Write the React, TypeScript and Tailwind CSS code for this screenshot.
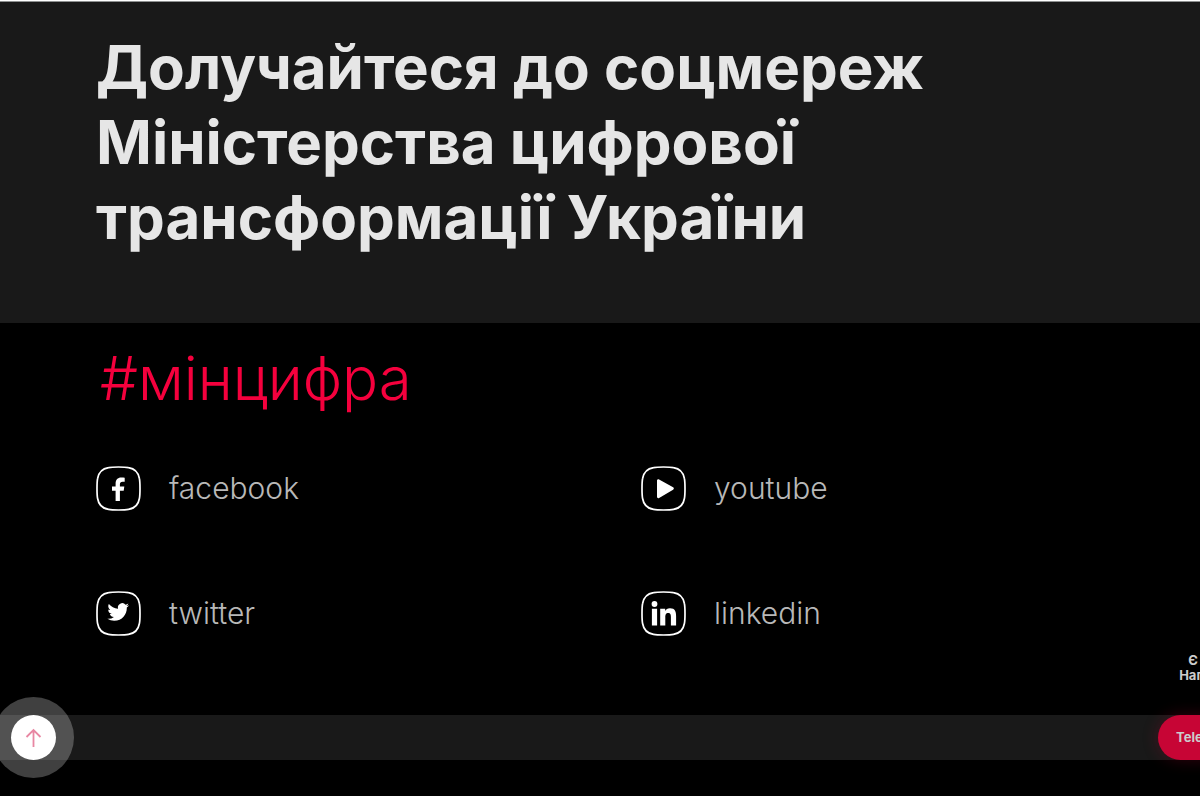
import type { ReactNode } from 'react'

interface SocialLink {
  name: string
  href: string
  glyph: ReactNode
}

const socialLinks: SocialLink[] = [
  {
    name: 'facebook',
    href: '#facebook',
    glyph: (
      <path d="M19.6 35V24.8H16v-4.2h3.6v-2.9c0-4 2.1-6.2 5.6-6.2 1.4 0 2.4.1 3.5.3v3.9h-2.1c-1.9 0-2.7.9-2.7 2.5v2.4h4.4l-.6 4.2h-3.8V35z" />
    ),
  },
  {
    name: 'youtube',
    href: '#youtube',
    glyph: <path d="M16 14.6c0-1.2 1.1-1.8 2.1-1.2l14 7.9c1 .6 1 1.8 0 2.4l-14 8.2c-1 .6-2.1 0-2.1-1.2z" />,
  },
  {
    name: 'twitter',
    href: '#twitter',
    glyph: (
      <path
        transform="translate(11.4 10.2) scale(.9)"
        d="M23.953 4.57a10 10 0 01-2.825.775 4.958 4.958 0 002.163-2.723c-.951.555-2.005.959-3.127 1.184a4.92 4.92 0 00-8.384 4.482C7.69 8.095 4.067 6.13 1.64 3.162a4.822 4.822 0 00-.666 2.475c0 1.71.87 3.213 2.188 4.096a4.904 4.904 0 01-2.228-.616v.06a4.923 4.923 0 003.946 4.827 4.996 4.996 0 01-2.212.085 4.936 4.936 0 004.604 3.417 9.867 9.867 0 01-6.102 2.105c-.39 0-.779-.023-1.17-.067a13.995 13.995 0 007.557 2.209c9.053 0 13.998-7.496 13.998-13.985 0-.21 0-.42-.015-.63A9.935 9.935 0 0024 4.59z"
      />
    ),
  },
  {
    name: 'linkedin',
    href: '#linkedin',
    glyph: (
      <>
        <circle cx="13.5" cy="13" r="2.9" />
        <path d="M10.9 17.7h5.2v16.8h-5.2zM19.2 17.7h5v2.2c.7-1.3 2.3-2.6 4.8-2.6 5.1 0 6.1 3.3 6.1 7.9v9.3h-5.2v-8.2c0-1.9 0-4.4-2.6-4.4s-3 2-3 4.3v8.3h-5.1z" />
      </>
    ),
  },
]

function SocialItem({ link }: { link: SocialLink }) {
  return (
    <a href={link.href} className="flex items-center gap-7 text-[#b8b8b8]">
      <svg viewBox="0 0 45 45" className="size-[45px] shrink-0 fill-white" aria-hidden="true">
        <path
          d="M22.5 1C27 1 30 1.1 32.5 1.6C38.5 2.6 42.4 6.5 43.4 12.5C43.9 15 44 18 44 22.5C44 27 43.9 30 43.4 32.5C42.4 38.5 38.5 42.4 32.5 43.4C30 43.9 27 44 22.5 44C18 44 15 43.9 12.5 43.4C6.5 42.4 2.6 38.5 1.6 32.5C1.1 30 1 27 1 22.5C1 18 1.1 15 1.6 12.5C2.6 6.5 6.5 2.6 12.5 1.6C15 1.1 18 1 22.5 1z"
          className="fill-none stroke-white"
          strokeWidth="1.7"
        />
        {link.glyph}
      </svg>
      <span className="text-[30px] leading-[45px] font-light">{link.name}</span>
    </a>
  )
}

function BackToTop() {
  return (
    <button
      type="button"
      aria-label="Нагору"
      className="absolute -left-[7px] -top-[18px] flex size-[81px] items-center justify-center rounded-full bg-white/25"
    >
      <span className="flex size-[45px] items-center justify-center rounded-full bg-white">
        <svg viewBox="0 0 18 20" className="h-5 w-[18px] fill-none stroke-[#e887a3]" strokeWidth="1.8" aria-hidden="true">
          <path d="M8.5 19V2M1.5 9l7-7 7 7" />
        </svg>
      </span>
    </button>
  )
}

function ChatWidget() {
  return (
    <div className="absolute -right-[92px] bottom-0 w-[134px] text-center text-[13px] font-bold text-[#cccccc]">
      <p className="mb-8 leading-[15px]">
        Є питання?
        <br />
        Напишіть нам
      </p>
      <a
        href="#telegram"
        className="block rounded-full bg-[#c70535] px-[18px] text-left leading-[45px] shadow-[0_0_16px_rgba(199,5,53,0.25)]"
      >
        Telegram-бот
      </a>
    </div>
  )
}

export default function App() {
  return (
    <div className="overflow-hidden border-t border-b-4 border-white bg-black font-['Inter','Liberation_Sans',sans-serif]">
      <header className="border-t border-[#8f9191] bg-[#191919] px-24 pt-7 pb-[68px]">
        <h1 className="max-w-[900px] text-[60px] leading-[75px] font-bold text-[#e6e6e6]">
          Долучайтеся до соцмереж Міністерства цифрової трансформації України
        </h1>
      </header>

      <main className="pt-[18px] pr-[14px] pb-[79px] pl-24">
        <h2 className="pl-1 text-[60px] leading-[75px] font-light text-[#f5003d]">#мінцифра</h2>
        <nav className="mt-[50px] grid grid-cols-2 gap-y-20">
          {socialLinks.map((link) => (
            <SocialItem key={link.name} link={link} />
          ))}
        </nav>
      </main>

      <footer className="relative mb-9 h-[45px] bg-[#191919]">
        <BackToTop />
        <ChatWidget />
      </footer>
    </div>
  )
}
